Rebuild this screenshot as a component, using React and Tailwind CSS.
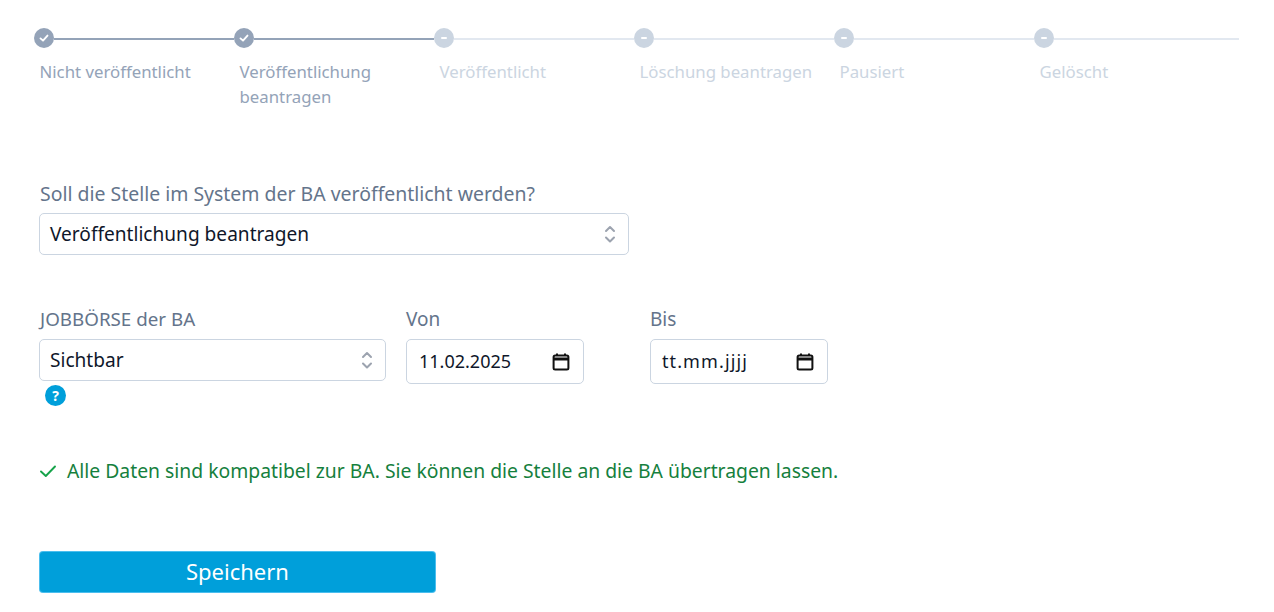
const F = { fontFamily: '"Noto Sans", sans-serif' };

const steps = [
  { label: "Nicht veröffentlicht", done: true },
  { label: "Veröffentlichung beantragen", done: true },
  { label: "Veröffentlicht" },
  { label: "Löschung beantragen" },
  { label: "Pausiert" },
  { label: "Gelöscht" },
];

function Step({ label, done, last, wide }) {
  return (
    <div className={last ? "flex-1" : "w-[200px] shrink-0"}>
      <div className="flex items-center h-[20px]">
        <div className={`w-[20px] h-[20px] rounded-full flex items-center justify-center shrink-0 ${done ? "bg-[#94a3b8]" : "bg-[#cbd5e1]"}`}>
          {done ? (
            <svg width="10" height="10" viewBox="0 0 10 10" fill="none" stroke="white" strokeWidth="1.9" strokeLinecap="round" strokeLinejoin="round">
              <path d="M1.5 5.4 L4 7.6 L8.5 2.6" />
            </svg>
          ) : (
            <div className="w-[6px] h-[2px] bg-white rounded-full" />
          )}
        </div>
        <div className={`flex-1 h-[2px] mt-[1px] ${done ? "bg-[#94a3b8]" : "bg-[#e2e8f0]"}`} />
      </div>
      <div className={`pl-[5.5px] mt-[11px] text-[16.8px] leading-[25px] ${wide ? "" : "pr-[24px]"} ${done ? "text-[#94a3b8]" : "text-[#cbd5e1]"}`}>
        {label}
      </div>
    </div>
  );
}

function Chevrons() {
  return (
    <svg width="12" height="20" viewBox="0 0 12 20" fill="none" stroke="#9ca3af" strokeWidth="2" strokeLinecap="round" strokeLinejoin="round">
      <path d="M2 7 L6 3 L10 7" />
      <path d="M2 13.5 L6 17.5 L10 13.5" />
    </svg>
  );
}

function Select({ value, className }) {
  return (
    <div className={`h-[42px] rounded-[5px] border border-[#cbd5e1] bg-white flex items-center justify-between pl-[10px] pr-[12px] text-[19.1px] text-[#0f172a] ${className}`}>
      <span>{value}</span>
      <Chevrons />
    </div>
  );
}

function DateField({ label, value, spaced }) {
  return (
    <div className="w-[178px]">
      <div className="text-[19px] leading-[26px] text-[#64748b] h-[26px]">{label}</div>
      <div className={`mt-[7px] h-[45px] rounded-[5px] border border-[#cbd5e1] bg-white flex items-center justify-between pr-[12px] text-[18px] text-[#0f172a] ${spaced ? "pl-[11px]" : "pl-[12px]"}`}>
        <span className={spaced ? "tracking-[1.1px]" : ""}>{value}</span>
        <svg width="20" height="20" viewBox="0 0 20 20" fill="none">
          <rect x="2.6" y="3.6" width="14.8" height="14" rx="1.5" stroke="#111" strokeWidth="2" />
          <path d="M2.5 7 H17.5" stroke="#111" strokeWidth="3" />
          <path d="M6 1.5 V4 M14 1.5 V4" stroke="#111" strokeWidth="2" />
        </svg>
      </div>
    </div>
  );
}

export default function App() {
  return (
    <div className="w-[1274px] h-[612px] bg-white overflow-hidden pt-[28px]" style={F}>
      <div className="flex ml-[34px] w-[1205px] h-[129px]">
        {steps.map((s, i) => (
          <Step key={s.label} {...s} wide={i === 3} last={i === steps.length - 1} />
        ))}
      </div>

      <div className="pl-[39px]">
        <div className="pt-[24px] text-[19.45px] leading-[26px] text-[#64748b] pl-px">
          Soll die Stelle im System der BA veröffentlicht werden?
        </div>
        <Select value="Veröffentlichung beantragen" className="w-[590px] mt-[6px]" />

        <div className="flex mt-[51px] items-start">
          <div className="w-[347px] mr-[20px]">
            <div className="text-[18.8px] leading-[26px] h-[26px] text-[#64748b] pl-px">JOBBÖRSE der BA</div>
            <Select value="Sichtbar" className="w-[347px] mt-[7px]" />
            <div className="ml-[6px] mt-[4px] w-[21px] h-[21px] rounded-full bg-[#009fda] text-white text-[14px] font-bold flex items-center justify-center leading-none">?</div>
          </div>
          <div className="mr-[66px]">
            <DateField label="Von" value="11.02.2025" />
          </div>
          <DateField label="Bis" value="tt.mm.jjjj" spaced />
        </div>

        <div className="flex items-center mt-[52px] h-[26px] text-[19.33px] text-[#15803d]">
          <svg width="16" height="16" viewBox="0 0 16 16" fill="none" stroke="#16a34a" strokeWidth="1.9" strokeLinecap="round" strokeLinejoin="round" className="ml-px">
            <path d="M1 8.5 L5.8 13 L15 3.5" />
          </svg>
          <span className="ml-[11px]">Alle Daten sind kompatibel zur BA. Sie können die Stelle an die BA übertragen lassen.</span>
        </div>

        <button className="block mt-[67px] w-[397px] h-[42px] pb-[3px] rounded-[4px] bg-[#009fda] border border-[#7dd3fc]/60 text-white text-[22px] leading-none">
          Speichern
        </button>
      </div>
    </div>
  );
}
